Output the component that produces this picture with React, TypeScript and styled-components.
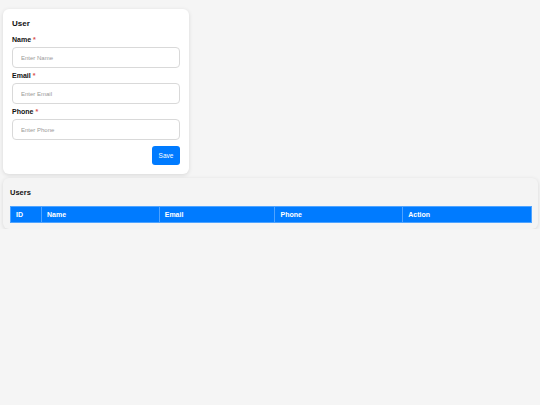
import styled, { createGlobalStyle } from 'styled-components';

const GlobalStyle = createGlobalStyle`
  body {
    margin: 0;
    background: #f5f5f5;
    font-family: "Liberation Sans", Arial, sans-serif;
    color: #111;
  }
`;

const Page = styled.div`
  padding: 9px 2px 0 3px;
  display: flex;
  flex-direction: column;
  gap: 4px;
`;

const FormCard = styled.div`
  width: 186px;
  box-sizing: border-box;
  background: #fff;
  border-radius: 6px;
  padding: 9px;
  box-shadow: 0 1px 4px rgba(0, 0, 0, 0.12);
  display: flex;
  flex-direction: column;
`;

const Title = styled.h3`
  margin: 0 0 5px;
  font-size: 8px;
  line-height: 12px;
  font-weight: bold;
`;

const Label = styled.label`
  display: block;
  font-size: 7px;
  line-height: 9px;
  font-weight: bold;
  margin-bottom: 3px;
`;

const Req = styled.span`
  color: #d9534f;
  margin-left: 2px;
`;

const Input = styled.input`
  display: block;
  width: 100%;
  box-sizing: border-box;
  height: 21px;
  border: 1px solid #d9d9d9;
  border-radius: 4px;
  padding: 0 8px;
  font-family: inherit;
  font-size: 6px;
  margin-bottom: 3px;
  &::placeholder {
    color: #999;
  }
`;

const Actions = styled.div`
  display: flex;
  justify-content: flex-end;
  margin-top: 3px;
`;

const SaveButton = styled.button`
  background: #007bff;
  color: #fff;
  border: none;
  border-radius: 3px;
  width: 28px;
  height: 19px;
  font-family: inherit;
  font-size: 6.5px;
  font-weight: normal;
  padding: 0;
`;

const ListCard = styled.div`
  background: #f4f4f4;
  border-radius: 6px;
  padding: 9px 6px 6px 7px;
  box-shadow: 0 1px 4px rgba(0, 0, 0, 0.12);
`;

const ListTitle = styled.h3`
  margin: 0 0 7px;
  font-size: 7.5px;
  line-height: 12px;
  font-weight: bold;
`;

const Table = styled.table`
  width: 100%;
  border-collapse: collapse;
`;

const Th = styled.th<{ w: number }>`
  width: ${(p) => p.w}px;
  background: #007bff;
  color: #fff;
  text-align: left;
  font-size: 7px;
  font-weight: bold;
  height: 16px;
  padding: 0 5px;
  box-sizing: border-box;
  border: 1px solid #4ea3ff;
`;

const fields = [
  { label: 'Name', placeholder: 'Enter Name' },
  { label: 'Email', placeholder: 'Enter Email' },
  { label: 'Phone', placeholder: 'Enter Phone' },
];

const columns = [
  { name: 'ID', w: 31 },
  { name: 'Name', w: 118 },
  { name: 'Email', w: 116 },
  { name: 'Phone', w: 128 },
  { name: 'Action', w: 129 },
];

export default function App() {
  return (
    <>
      <GlobalStyle />
      <Page>
        <FormCard>
          <Title>User</Title>
          {fields.map((f) => (
            <div key={f.label}>
              <Label>
                {f.label}
                <Req>*</Req>
              </Label>
              <Input placeholder={f.placeholder} />
            </div>
          ))}
          <Actions>
            <SaveButton>Save</SaveButton>
          </Actions>
        </FormCard>
        <ListCard>
          <ListTitle>Users</ListTitle>
          <Table>
            <thead>
              <tr>
                {columns.map((c) => (
                  <Th key={c.name} w={c.w}>
                    {c.name}
                  </Th>
                ))}
              </tr>
            </thead>
          </Table>
        </ListCard>
      </Page>
    </>
  );
}
